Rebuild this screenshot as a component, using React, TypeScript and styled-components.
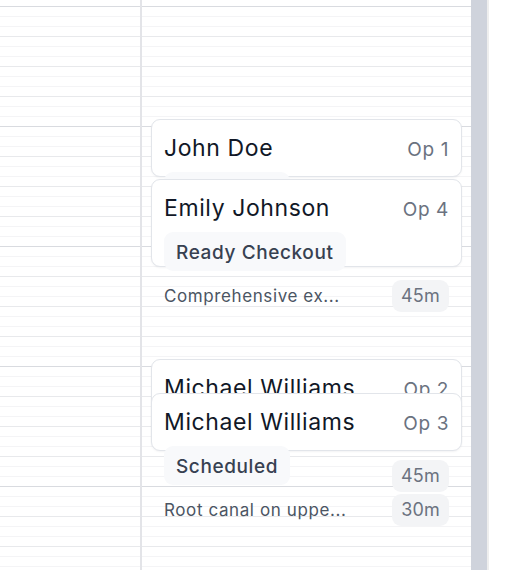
import React from 'react';
import styled, { createGlobalStyle } from 'styled-components';

const GlobalStyle = createGlobalStyle`
  html, body { margin: 0; padding: 0; background: #ffffff; }
  body { font-family: Inter, "Noto Sans", sans-serif; -webkit-font-smoothing: antialiased; }
  *, *::before, *::after { box-sizing: border-box; }
`;

type Appointment = {
  id: string;
  name: string;
  op: string;
  status: string;
  description: string;
  duration: number;
  top: number;
};

const appointments: Appointment[] = [
  { id: 'a1', name: 'John Doe', op: 'Op 1', status: 'Scheduled', description: 'Routine cleaning', duration: 30, top: 119 },
  { id: 'a2', name: 'Emily Johnson', op: 'Op 4', status: 'Ready Checkout', description: 'Comprehensive ex...', duration: 45, top: 179 },
  { id: 'a3', name: 'Michael Williams', op: 'Op 2', status: 'Scheduled', description: '', duration: 45, top: 359 },
  { id: 'a4', name: 'Michael Williams', op: 'Op 3', status: 'Scheduled', description: 'Root canal on uppe...', duration: 30, top: 393 },
];

const Viewport = styled.div`
  display: flex;
  width: 524px;
  height: 570px;
  overflow: hidden;
  background: #ffffff;
`;

const Column = styled.div<{ $width: number; $divider?: boolean }>`
  position: relative;
  flex: none;
  width: ${(p) => p.$width}px;
  height: 100%;
  padding-top: 6px;
  overflow: hidden;
  border-right: ${(p) => (p.$divider ? '2px solid #e3e4e8' : 'none')};
`;

const HourBlock = styled.div`
  display: flex;
  flex-direction: column;
`;

const Slot = styled.div<{ $kind: 'hour' | 'quarter' | 'minor' }>`
  height: 10px;
  border-top: 1px solid
    ${(p) => (p.$kind === 'hour' ? '#d9dbe0' : p.$kind === 'quarter' ? '#e8e9ec' : '#f4f4f6')};
`;

const ScrollTrack = styled.div`
  flex: none;
  width: 16px;
  height: 100%;
  background: #cfd3dc;
`;

const Edge = styled.div`
  flex: none;
  width: 2px;
  height: 100%;
  background: #eeeeee;
`;

const Blank = styled.div`
  flex: 1;
  background: #ffffff;
`;

const Card = styled.div`
  position: absolute;
  left: 9px;
  right: 9px;
  background: #ffffff;
  border: 1px solid #e2e5ea;
  border-radius: 9px;
  box-shadow: 0 1px 2px rgba(16, 24, 40, 0.05);
  padding: 12px 12px 0;
`;

const CardHeader = styled.div`
  display: flex;
  justify-content: space-between;
  align-items: baseline;
  height: 31px;
  padding-top: 1px;
`;

const Name = styled.span`
  font-size: 23px;
  line-height: 31px;
  font-weight: 400;
  letter-spacing: 0.6px;
  color: #111827;
  white-space: nowrap;
`;

const Op = styled.span`
  font-size: 19px;
  line-height: 31px;
  letter-spacing: 0.6px;
  color: #6b7280;
  white-space: nowrap;
`;

const BadgeRow = styled.div`
  display: flex;
  margin-top: 9px;
`;

const Badge = styled.span`
  display: inline-block;
  padding: 7px 12px 5px;
  font-size: 19px;
  line-height: 27px;
  font-weight: 500;
  letter-spacing: 0.6px;
  color: #374151;
  background: #f8f9fb;
  border-radius: 9px;
  white-space: nowrap;
`;

const DetailRow = styled.div`
  display: flex;
  justify-content: space-between;
  align-items: center;
  margin-top: 9px;
`;

const Description = styled.span`
  font-size: 17px;
  line-height: 24px;
  letter-spacing: 0.6px;
  color: #4b5563;
  white-space: nowrap;
`;

const Duration = styled.span`
  padding: 4px 9px;
  font-size: 18px;
  line-height: 24px;
  letter-spacing: 0.2px;
  color: #6b7280;
  background: #f3f4f6;
  border-radius: 9px;
  white-space: nowrap;
`;

const HOURS = 5;

function Timeline() {
  return (
    <>
      {Array.from({ length: HOURS }).map((_, h) => (
        <HourBlock key={h}>
          {Array.from({ length: 12 }).map((__, i) => (
            <Slot key={i} $kind={i === 0 ? 'hour' : i % 3 === 0 ? 'quarter' : 'minor'} />
          ))}
        </HourBlock>
      ))}
    </>
  );
}

function AppointmentCard({ a }: { a: Appointment }) {
  return (
    <Card style={{ top: a.top, height: a.duration * 2 - 2 }}>
      <CardHeader>
        <Name>{a.name}</Name>
        <Op>{a.op}</Op>
      </CardHeader>
      <BadgeRow>
        <Badge>{a.status}</Badge>
      </BadgeRow>
      <DetailRow>
        <Description>{a.description}</Description>
        <Duration>{a.duration}m</Duration>
      </DetailRow>
    </Card>
  );
}

export default function App() {
  return (
    <>
      <GlobalStyle />
      <Viewport>
        <Column $width={142} $divider>
          <Timeline />
        </Column>
        <Column $width={329}>
          <Timeline />
          {appointments.map((a) => (
            <AppointmentCard key={a.id} a={a} />
          ))}
        </Column>
        <ScrollTrack />
        <Edge />
        <Blank />
      </Viewport>
    </>
  );
}
